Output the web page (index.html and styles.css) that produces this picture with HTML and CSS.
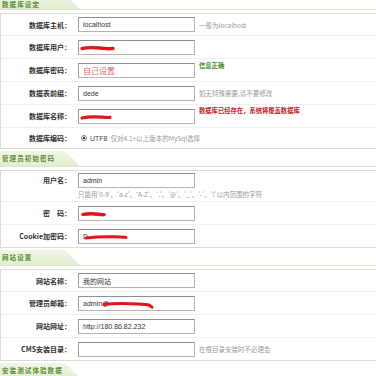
FILE: index.html
```html
<!DOCTYPE html>
<html lang="zh-CN">
<head>
    <meta charset="UTF-8">
    <title>DedeCMS 安装</title>
    <meta name="viewport" content="width=device-width, initial-scale=1.0">
    <link rel="stylesheet" href="styles.css">
</head>
<body>
<div class="page">
    <div class="sec-title first"><span class="tab">数据库设定</span></div>
    <div class="box">
        <div class="row r22">
            <div class="label">数据库主机：</div>
            <div class="field"><input class="txt" type="text" value="localhost"></div>
            <span class="tip">一般为localhost</span>
        </div>
        <div class="row">
            <div class="label">数据库用户：</div>
            <div class="field">
                <input class="txt" type="text" value="">
                <svg class="scrawl" style="left:2px;top:4px" width="36" height="9"><path d="M2 4.6 C7 3.2 13 3.4 20 4 S29 5.2 33 4.4" stroke="#e4141a" stroke-width="3.4" fill="none" stroke-linecap="round"/></svg>
            </div>
        </div>
        <div class="row">
            <div class="label">数据库密码：</div>
            <div class="field"><input class="txt pwd-hint" type="text" value="自己设置"></div>
            <span class="tip ok">信息正确</span>
        </div>
        <div class="row">
            <div class="label">数据表前缀：</div>
            <div class="field"><input class="txt" type="text" value="dede_"></div>
            <span class="tip">如无特殊需要,请不要修改</span>
        </div>
        <div class="row">
            <div class="label">数据库名称：</div>
            <div class="field">
                <input class="txt" type="text" value="">
                <svg class="scrawl" style="left:2px;top:4px" width="32" height="9"><path d="M2 5 C8 3.6 15 3.8 22 4.2 S28 4.6 30 4.4" stroke="#e4141a" stroke-width="3.2" fill="none" stroke-linecap="round"/></svg>
            </div>
            <span class="tip warn">数据库已经存在，系统将覆盖数据库</span>
        </div>
        <div class="row r20">
            <div class="label">数据库编码：</div>
            <div class="radio-wrap">
                <input class="radio" type="radio" name="charset" checked>
                <span class="opt">UTF8</span>
                <span class="tip">仅对4.1+以上版本的MySql选择</span>
            </div>
        </div>
    </div>

    <div class="sec-title"><span class="tab">管理员初始密码</span></div>
    <div class="box">
        <div class="row tall">
            <div class="label">用户名：</div>
            <div class="stack">
                <div class="field"><input class="txt" type="text" value="admin"></div>
                <div class="hint">只能用'0-9'、'a-z'、'A-Z'、'.'、'@'、'_'、'-'、'!'以内范围的字符</div>
            </div>
        </div>
        <div class="row">
            <div class="label">密　码：</div>
            <div class="field">
                <input class="txt" type="text" value="">
                <svg class="scrawl" style="left:3px;top:4px" width="26" height="9"><path d="M2 4.4 C7 3.4 13 3.6 18 4.2 S22 4.8 23 4.6" stroke="#e4141a" stroke-width="3.4" fill="none" stroke-linecap="round"/></svg>
            </div>
        </div>
        <div class="row r22">
            <div class="label">Cookie加密码：</div>
            <div class="field">
                <input class="txt" type="text" value="D">
                <svg class="scrawl" style="left:6px;top:4px" width="44" height="9"><path d="M2 5 C10 4 20 3.6 30 3.8 S39 4.2 42 4.4" stroke="#e4141a" stroke-width="3" fill="none" stroke-linecap="round"/></svg>
            </div>
        </div>
    </div>

    <div class="sec-title"><span class="tab">网站设置</span></div>
    <div class="box">
        <div class="row r22">
            <div class="label">网站名称：</div>
            <div class="field"><input class="txt" type="text" value="我的网站"></div>
        </div>
        <div class="row">
            <div class="label">管理员邮箱：</div>
            <div class="field">
                <input class="txt" type="text" value="admin@">
                <svg class="scrawl" style="left:24px;top:4px" width="54" height="11"><path d="M2 4.6 C12 3.2 24 3.4 36 4 S47 4.6 50 7.2" stroke="#e4141a" stroke-width="3" fill="none" stroke-linecap="round"/></svg>
            </div>
        </div>
        <div class="row">
            <div class="label">网站网址：</div>
            <div class="field"><input class="txt" type="text" value="http://180.86.82.232"></div>
        </div>
        <div class="row r22">
            <div class="label">CMS安装目录：</div>
            <div class="field"><input class="txt" type="text" value=""></div>
            <span class="tip">在根目录安装时不必理会</span>
        </div>
    </div>

    <div class="sec-title"><span class="tab">安装测试体验数据</span></div>
</div>
</body>
</html>
```

FILE: styles.css
```css
html { box-sizing: border-box; }
*, *::before, *::after { box-sizing: inherit; }
body {
    margin: 0;
    background: #fff;
    color: #333;
    font-family: "Noto Sans CJK SC", "Liberation Sans", sans-serif;
    font-size: 7px;
    overflow: hidden;
}
.page {
    width: 400px;
    margin-top: -6px;
}
.sec-title {
    height: 16px;
    border-bottom: 1px solid #dde8cc;
    margin-bottom: 3px;
}
.box + .sec-title {
    margin-top: 2px;
}
.tab {
    display: block;
    width: 80px;
    height: 15px;
    padding: 1px 0 0 2px;
    line-height: 12px;
    background: linear-gradient(#f0f6e6, #e1edd0);
    clip-path: polygon(0 0, 64px 0, 68px 20%, 80px 100%, 0 100%);
    color: #5c8d36;
    font-weight: bold;
    font-size: 6.5px;
    letter-spacing: 1.1px;
}
.sec-title.first .tab {
    padding-top: 4px;
}
.box {
    border: 1px solid #dedbd2;
    background: #fff;
}
.row {
    display: flex;
    align-items: center;
    height: 23px;
    border-bottom: 1px solid #efefef;
}
.row:last-child {
    border-bottom: none;
}
.row.r22 { height: 22px; }
.row.r20 { height: 20px; }
.row.tall {
    height: 31px;
    align-items: flex-start;
    padding-top: 2px;
}
.label {
    width: 70px;
    margin-right: 7px;
    text-align: right;
    font-weight: bold;
    color: #333;
    white-space: nowrap;
}
.row.tall .label {
    line-height: 15px;
}
.field {
    position: relative;
    width: 117px;
    height: 15px;
}
.txt {
    display: block;
    width: 117px;
    height: 15px;
    margin: 0;
    padding: 0 4px;
    border: 1px solid #b4b4b4;
    border-top-color: #8f8f8f;
    border-left-color: #a0a0a0;
    background: #fff;
    color: #333;
    font-family: "Liberation Sans", "Noto Sans CJK SC", sans-serif;
    font-size: 7px;
    line-height: 13px;
    outline: none;
}
.pwd-hint {
    color: #e06a6a;
    font-family: "Liberation Serif", "Noto Sans CJK SC", serif;
    font-size: 8px;
}
.scrawl {
    position: absolute;
}
.tip {
    margin-left: 4px;
    color: #9a9a9a;
    font-size: 6.5px;
    white-space: nowrap;
}
.tip.ok {
    align-self: flex-start;
    margin-top: 2px;
    color: #3f8a2c;
    font-weight: bold;
    font-size: 6.3px;
}
.tip.warn {
    align-self: flex-start;
    margin-top: 1px;
    color: #c8202a;
    font-weight: bold;
    font-size: 6.3px;
}
.stack {
    display: flex;
    flex-direction: column;
}
.hint {
    margin-top: 2px;
    color: #9a9a9a;
    font-size: 6.5px;
    line-height: 9px;
    white-space: nowrap;
}
.radio-wrap {
    display: flex;
    align-items: center;
    padding-left: 3px;
}
.radio {
    appearance: none;
    width: 6px;
    height: 6px;
    margin: 0 3px 0 0;
    border: 1px solid #7d7d7d;
    border-radius: 50%;
    background: radial-gradient(circle, #333 0 1.3px, #fff 1.6px);
}
.opt {
    font-family: "Liberation Sans", sans-serif;
    color: #444;
}
.radio-wrap .tip {
    margin-left: 3px;
}
```
